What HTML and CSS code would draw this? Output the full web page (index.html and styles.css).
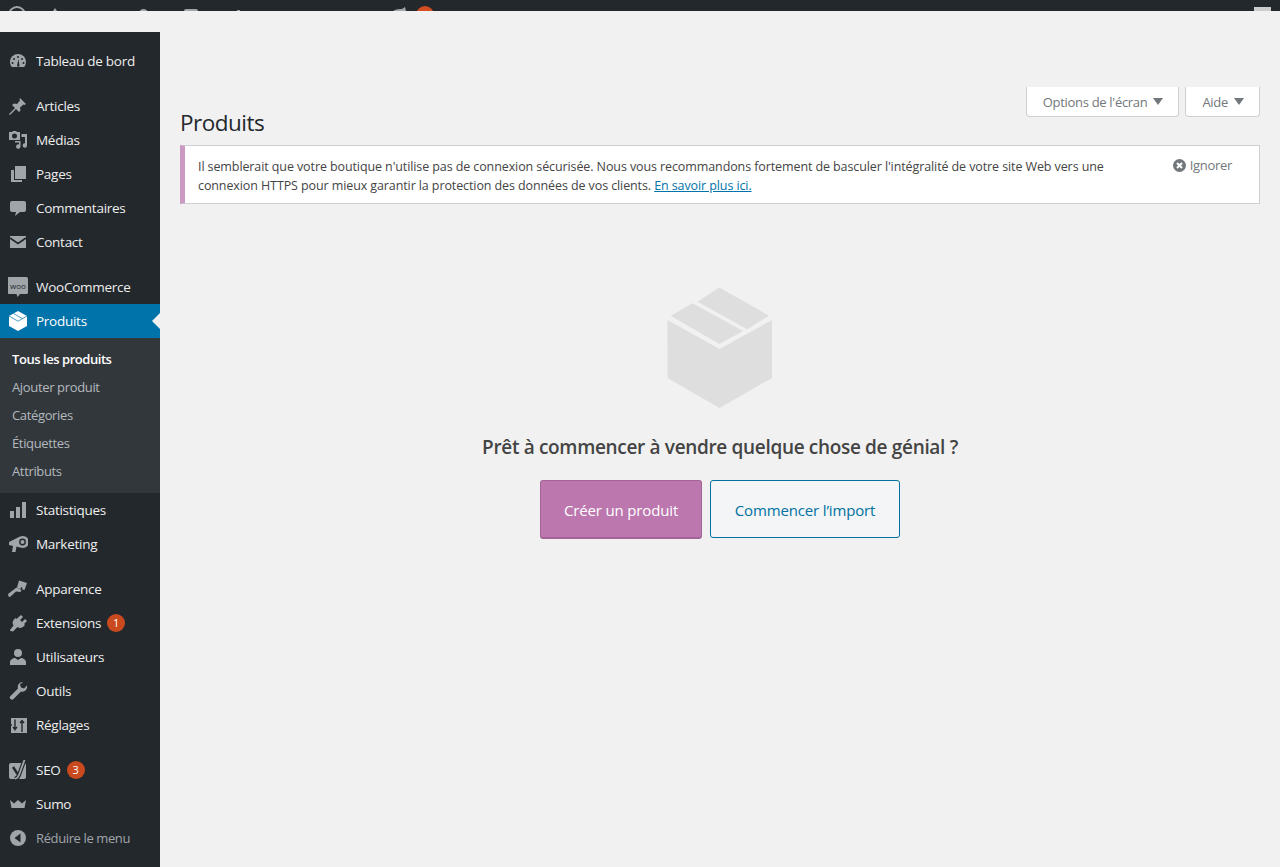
FILE: index.html
```html
<!DOCTYPE html>
<html lang="fr">
<head>
  <meta charset="UTF-8"/>
  <meta name="viewport" content="width=device-width, initial-scale=1.0"/>
  <title>Produits</title>
  <link rel="stylesheet" href="styles.css">
</head>
<body>
  <div class="adminbar">
    <div class="bar-left">
      <svg class="bar-wp" width="18" height="18" viewBox="0 0 18 18"><circle cx="9" cy="9" r="8" fill="none" stroke="#a0a5aa" stroke-width="2"/></svg>
      <svg class="bar-home" width="14" height="14" viewBox="0 0 14 14"><path d="M7 0l2 3h-4zM3 3h3v6h-3z" fill="#a0a5aa"/><path d="M8 3h3v6h-3z" fill="#a0a5aa"/></svg>
      <span class="bar-dot"></span>
      <span class="bar-rect"></span>
      <span class="bar-tick"></span>
      <svg class="bar-woo" width="18" height="14" viewBox="0 0 18 14"><path d="M2 6c3-3 7-3 10-3l3-2 1 4v8h-14z" fill="#a0a5aa"/></svg>
      <span class="bar-badge"></span>
    </div>
    <span class="bar-avatar"></span>
  </div>

  <div class="wrap">
    <nav class="sidebar">
      <a class="item"><svg class="ico" viewBox="0 0 20 20"><path d="M10 3a8 8 0 0 0-8 8c0 2 .7 3.700 1.800 5h12.400A8 8 0 0 0 18 11a8 8 0 0 0-8-8z" fill="#a0a5aa"/><g fill="#23282d"><circle cx="10" cy="6" r="1"/><circle cx="6" cy="8" r="1"/><circle cx="14" cy="8" r="1"/><circle cx="4.500" cy="12" r="1"/><circle cx="15.500" cy="12" r="1"/><path d="M9 15l1.500-7 1 7a1.500 1.500 0 0 1-2.500 0z"/></g></svg>Tableau de bord</a>
      <div class="sep"></div>
      <a class="item"><svg class="ico" viewBox="0 0 20 20"><path d="M12 2l6 6-1.500 1-1-.5-3.500 3 .5 3-1.500 1.500-3-3-5.500 5.500-1.500.5.500-1.500 5.500-5.500-3-3L6 7.500l3 .5 3-3.500-.5-1z" fill="#a0a5aa"/></svg>Articles</a>
      <a class="item"><svg class="ico" viewBox="0 0 20 20"><path d="M1 2h3l1-1h3l1 1h3v8h-11zM6.500 3.500a2.500 2.500 0 1 0 0 5 2.500 2.500 0 0 0 0-5z" fill="#a0a5aa" fill-rule="evenodd"/><path d="M13.500 4h5.500v11.500a2.200 2.200 0 1 1-2-2.200v-6.300h-3.500zM7 11h5.500v5.500a2.200 2.200 0 1 1-1.500-2.100v-1.900h-4z" fill="#a0a5aa"/></svg>Médias</a>
      <a class="item"><svg class="ico" viewBox="0 0 20 20"><path d="M7 2h11v13h-11z" fill="#a0a5aa"/><path d="M3 6h3v10h8v2h-11z" fill="#a0a5aa"/></svg>Pages</a>
      <a class="item"><svg class="ico" viewBox="0 0 20 20"><path d="M4 3h12a2 2 0 0 1 2 2v7a2 2 0 0 1-2 2h-4l-5 4 1-4h-4a2 2 0 0 1-2-2v-7a2 2 0 0 1 2-2z" fill="#a0a5aa"/></svg>Commentaires</a>
      <a class="item"><svg class="ico" viewBox="0 0 20 20"><path d="M2 4h16v12h-16z" fill="#a0a5aa"/><path d="M2 6l8 5.500 8-5.500" fill="none" stroke="#23282d" stroke-width="1.600"/></svg>Contact</a>
      <div class="sep"></div>
      <a class="item"><svg class="ico" viewBox="0 0 20 20"><path d="M1.500 0h17a1.500 1.500 0 0 1 1.500 1.500v14a1.500 1.500 0 0 1-1.500 1.500h-6.500l-2.500 3-1-3h-7.500a1.500 1.500 0 0 1-1.500-1.500v-14a1.500 1.500 0 0 1 1.500-1.500z" fill="#a0a5aa"/><text x="10" y="11.500" class="woo-txt">woo</text></svg>WooCommerce</a>
      <a class="item current"><svg class="ico" viewBox="0 0 20 20"><path d="M10 0l9 5v10l-9 5-9-5v-10z" fill="#fff"/><path d="M1 5l9 5.200 9-5.200M5.500 2.500l9 5.200" fill="none" stroke="#0073aa" stroke-width=".7"/></svg>Produits</a>
      <div class="submenu">
        <a class="sub active">Tous les produits</a>
        <a class="sub">Ajouter produit</a>
        <a class="sub">Catégories</a>
        <a class="sub">Étiquettes</a>
        <a class="sub">Attributs</a>
      </div>
      <a class="item"><svg class="ico" viewBox="0 0 20 20"><path d="M2 11h4v7h-4zM8 7h4v11h-4zM14 2h4v16h-4z" fill="#a0a5aa"/></svg>Statistiques</a>
      <a class="item"><svg class="ico" viewBox="0 0 20 20"><path d="M1 8l11-5.500 3-.5a6 6 0 0 1 0 12l-3-.5-3.500-1-1 5.500h-3.500l1-6-4-1z" fill="#a0a5aa"/><circle cx="14.500" cy="8" r="3.400" fill="#23282d"/><circle cx="14.500" cy="8" r="2" fill="#a0a5aa"/></svg>Marketing</a>
      <div class="sep"></div>
      <a class="item"><svg class="ico" viewBox="0 0 20 20"><path d="M11 1.500l8 2.500-2.500 7-2-.5-.5-2-1-.5-.5 2-2-.5-1.500-1z" fill="#a0a5aa"/><path d="M8.500 8.500l5 2.500-1 2-4.500-.5-6 5.500-1.500-.5-.5-2.500z" fill="#a0a5aa"/></svg>Apparence</a>
      <a class="item"><svg class="ico" viewBox="0 0 20 20"><path d="M13 2l2 2-3 3 2 2 3-3 2 2-3 3 1 1-1.500 1.500a5 5 0 0 1-6 .5l-4.500 4.500-2.500-.5-.5-1 3.500-4.500a5 5 0 0 1 .5-6l1.500-1.500 1 1z" fill="#a0a5aa"/></svg>Extensions<span class="badge">1</span></a>
      <a class="item"><svg class="ico" viewBox="0 0 20 20"><circle cx="10" cy="6" r="4" fill="#a0a5aa"/><path d="M2 18v-3c0-2 3-4 5-4l3 2 3-2c2 0 5 2 5 4v3z" fill="#a0a5aa"/></svg>Utilisateurs</a>
      <a class="item"><svg class="ico" viewBox="0 0 20 20"><path d="M15 1a5 5 0 0 0-5 6.500l-7.500 7.500a2 2 0 0 0 3 3l7.500-7.500a5 5 0 0 0 6-6l-3 3-3-1-1-3 3-2.500z" fill="#a0a5aa"/></svg>Outils</a>
      <a class="item"><svg class="ico" viewBox="0 0 20 20"><path d="M3 3h16v15h-16z" fill="#a0a5aa"/><path d="M7 4.500v11M5 12l2 2.500 2-2.500M14 17v-11M12 8l2-2.500 2 2.500M3 10h1" fill="none" stroke="#23282d" stroke-width="1.400"/></svg>Réglages</a>
      <div class="sep"></div>
      <a class="item"><svg class="ico" viewBox="0 0 20 20"><path d="M3 3h13a2 2 0 0 1 2 2v12a2 2 0 0 1-2 2h-13a2 2 0 0 1-2-2v-12a2 2 0 0 1 2-2z" fill="#a0a5aa"/><path d="M5 7l4.500 7" fill="none" stroke="#23282d" stroke-width="2.400"/><path d="M16.500 0l-5.500 15c-.6 1.800-2 3.300-4 4" fill="none" stroke="#23282d" stroke-width="4"/><path d="M16.500 0l-5.500 15c-.6 1.800-2 3.300-4 4" fill="none" stroke="#a0a5aa" stroke-width="1.800"/></svg>SEO<span class="badge">3</span></a>
      <a class="item"><svg class="ico" viewBox="0 0 20 20"><path d="M2 6l4 3.500 4-3.500 4 3.500 4-3.500-1.500 8h-13z" fill="#a0a5aa"/></svg>Sumo</a>
      <a class="item collapse"><svg class="ico" viewBox="0 0 20 20"><circle cx="10" cy="10" r="8" fill="#a0a5aa"/><path d="M12.500 5.500v9l-6-4.500z" fill="#23282d"/></svg>Réduire le menu</a>
    </nav>

    <main class="content">
      <div class="screen-meta">
        <a class="meta-tab">Options de l'écran<span class="caret"></span></a>
        <a class="meta-tab">Aide<span class="caret"></span></a>
      </div>
      <h1>Produits</h1>
      <div class="notice">
        <p>Il semblerait que votre boutique n'utilise pas de connexion sécurisée. Nous vous recommandons fortement de basculer l'intégralité de votre site Web vers une connexion HTTPS pour mieux garantir la protection des données de vos clients. <a href="#">En savoir plus ici.</a></p>
        <a class="dismiss"><svg width="13" height="13" viewBox="0 0 13 13"><circle cx="6.500" cy="6.500" r="6.500" fill="#72777c"/><path d="M4 4l5 5M9 4l-5 5" stroke="#fff" stroke-width="2"/></svg>Ignorer</a>
      </div>
      <div class="empty">
        <svg class="box" width="106" height="122" viewBox="0 0 106 122">
          <path d="M.5 33l52 29 52.500-29v58l-52.500 30-52-30z" fill="#dedede"/>
          <path d="M3.700 28.700l22-12.400 50.600 27.700-24 13zM30.300 14.700l22-14.200 49.700 28.200-21.700 13.600z" fill="#dedede"/>
        </svg>
        <h2>Prêt à commencer à vendre quelque chose de génial ?</h2>
        <div class="actions">
          <a class="cta primary">Créer un produit</a>
          <a class="cta secondary">Commencer l’import</a>
        </div>
      </div>
    </main>
  </div>
</body>
</html>
```

FILE: styles.css
```css
html, body { margin: 0; height: 100%; overflow: hidden; }
body { background: #f1f1f1; color: #444; font-family: "Open Sans", "Noto Sans", sans-serif; font-size: 13px; }

.adminbar { height: 11px; background: #23282d; overflow: hidden; display: flex; justify-content: space-between; }
.bar-left { position: relative; width: 500px; }
.bar-left > * { position: absolute; }
.bar-wp { left: 8px; top: 6px; }
.bar-home { left: 48px; top: 8px; }
.bar-dot { left: 139px; top: 9px; width: 9px; height: 9px; border-radius: 50%; background: #a0a5aa; }
.bar-rect { left: 184px; top: 9px; width: 14px; height: 9px; border-radius: 2px 2px 0 0; background: #a0a5aa; }
.bar-tick { left: 237px; top: 10px; width: 3px; height: 3px; background: #a0a5aa; }
.bar-woo { left: 390px; top: 6px; }
.bar-badge { left: 416px; top: 6px; width: 18px; height: 18px; border-radius: 50%; background: #d54e21; }
.bar-avatar { width: 17px; height: 4px; margin: 7px 9px 0 0; background: #ccc; }

.wrap { display: flex; height: 856px; }

.sidebar { width: 160px; flex: none; margin-top: 21px; padding-top: 12px; background: #23282d; box-sizing: border-box; }
.item { display: flex; align-items: center; box-sizing: border-box; height: 34px; color: #eee; font-size: 13.500px; letter-spacing: -0.27px; position: relative; }
.ico { width: 20px; height: 20px; flex: none; margin: 0 8px; }
.woo-txt { font-size: 8px; fill: #23282d; text-anchor: middle; font-family: "Open Sans", sans-serif; letter-spacing: 0; }
.sep { height: 11px; }
.item.current { background: #0073aa; color: #fff; }
.item.current::after { content: ""; position: absolute; right: 0; top: 9px; border: 8px solid transparent; border-right-color: #f1f1f1; border-left-width: 0; }
.collapse { color: #a0a5aa; font-size: 13px; letter-spacing: -0.38px; }
.badge { width: 18px; height: 18px; margin-left: 6px; border-radius: 50%; background: #ca4a1f; color: #fff; font-size: 11px; line-height: 18px; text-align: center; letter-spacing: 0; }

.submenu { background: #32373c; padding: 7px 0 8px; }
.sub { display: block; height: 28px; line-height: 28px; padding-left: 12px; color: #b4b9be; font-size: 13px; letter-spacing: -0.35px; }
.sub.active { color: #fff; font-weight: 600; letter-spacing: -0.45px; }

.content { flex: 1; padding: 0 20px; min-width: 0; }
.screen-meta { display: flex; justify-content: flex-end; gap: 6px; margin-top: 76px; }
.meta-tab { display: flex; align-items: center; height: 28px; padding: 1px 15px 0 16px; background: #fff; border: 1px solid #ccd0d4; border-top: none; border-radius: 0 0 4px 4px; color: #72777c; font-size: 13px; letter-spacing: -0.3px; }
.caret { margin-left: 6px; margin-top: -1px; border: 5px solid transparent; border-top: 7px solid #72777c; border-bottom: 0; }

h1 { margin: -9px 0 0; font-size: 22.500px; font-weight: 400; color: #23282d; line-height: 29px; letter-spacing: -0.5px; }

.notice { display: flex; justify-content: space-between; align-items: flex-start; margin-top: 8px; padding: 11px 27px 8px 13px; background: #fff; border: 1px solid #ccd0d4; border-left: 5px solid #cc99c2; }
.notice p { margin: 0; width: 930px; font-size: 12.500px; line-height: 19px; color: #444; letter-spacing: -0.1px; }
.notice p a { color: #0073aa; }
.dismiss { display: flex; align-items: center; gap: 4px; color: #72777c; font-size: 13px; letter-spacing: -0.3px; margin-top: -1px; }

.empty { display: flex; flex-direction: column; align-items: center; padding-top: 83px; }
.box { display: block; }
.empty h2 { margin: 24px 0 0; font-size: 19px; font-weight: 600; line-height: 28px; color: #444; letter-spacing: -0.33px; }
.actions { display: flex; gap: 8px; margin-top: 19px; }
.cta { display: flex; align-items: center; justify-content: center; box-sizing: border-box; height: 59px; padding-top: 1px; font-size: 15px; border-radius: 3px; letter-spacing: -0.15px; }
.primary { width: 162px; background: #bb77ae; border: 1px solid #a36597; border-bottom-width: 2px; color: #fff; }
.secondary { width: 190px; height: 58px; background: #f3f5f6; border: 1px solid #0071a1; color: #0071a1; }
```
